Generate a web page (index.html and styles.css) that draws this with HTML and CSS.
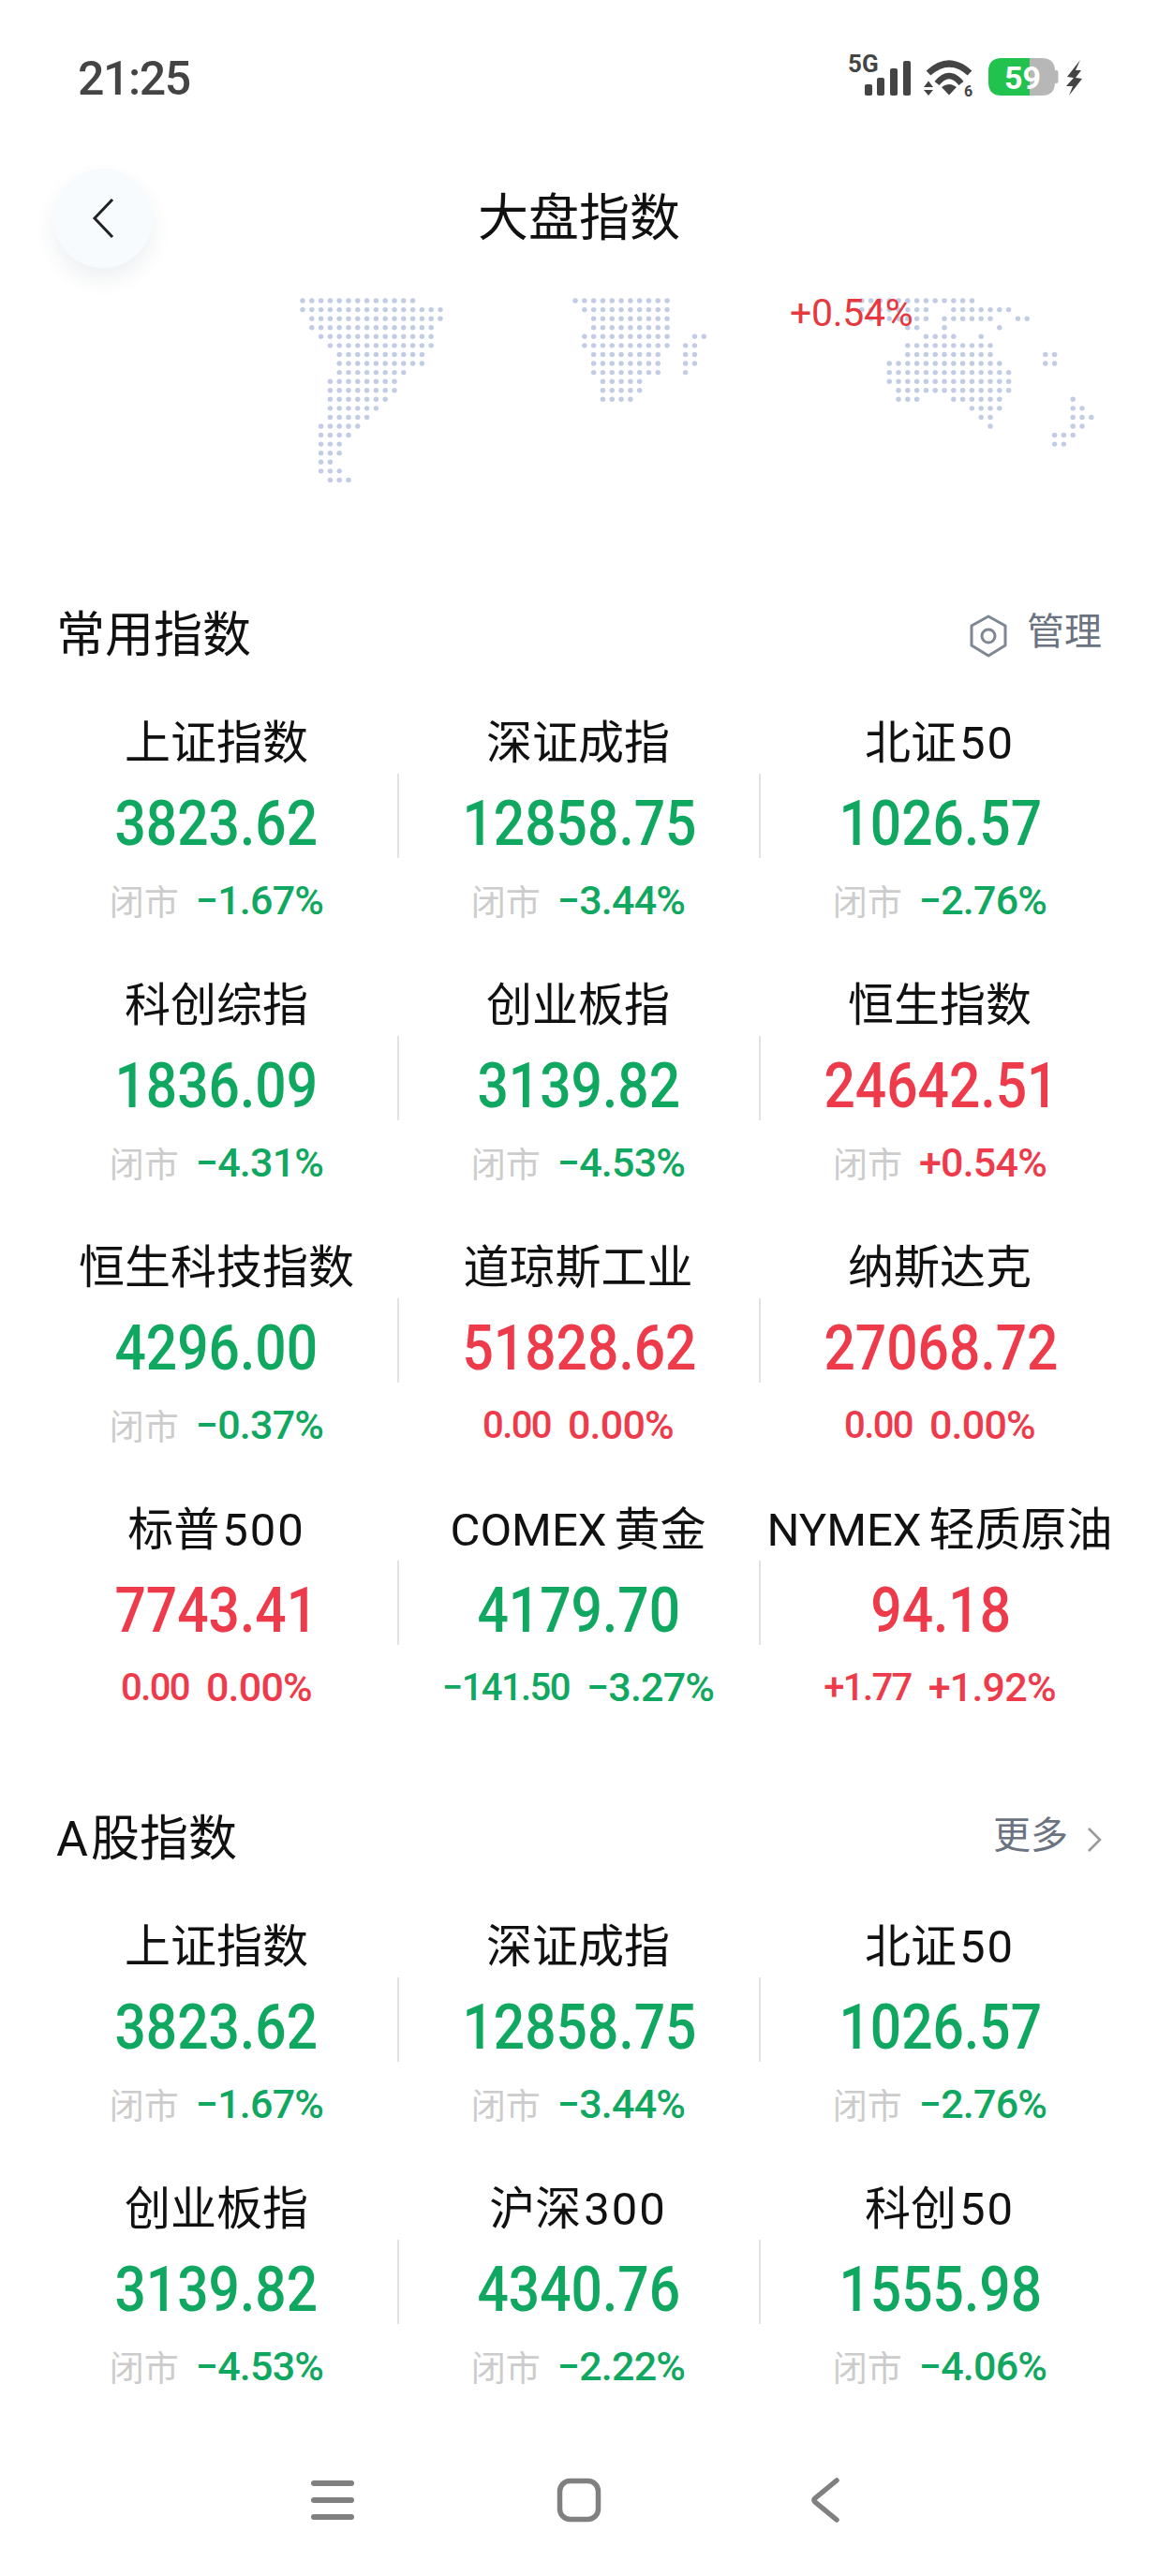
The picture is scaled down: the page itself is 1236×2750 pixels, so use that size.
FILE: index.html
```html
<!DOCTYPE html>
<html lang="zh">
<head>
 <meta charset="utf-8">
 <title>大盘指数</title>
 <link rel="stylesheet" href="styles.css">
</head>
<body>
 <!-- status bar -->
 <div class="status">
  <span class="time">21:25</span>
  <svg class="status-icons" width="252" height="56" viewBox="0 -8 252 56">
   <text x="0" y="19" class="net">5G</text>
   <g fill="#444">
    <rect x="18" y="32" width="8" height="12" rx="2"/>
    <rect x="31" y="25" width="8" height="19" rx="2"/>
    <rect x="45" y="15" width="8" height="29" rx="2"/>
    <rect x="59" y="7" width="8" height="37" rx="2"/>
    <path d="M86 28.500l5 6.500h-10z M86 44l-5-6h10z"/>
    <path d="M100 35q8-6 16 0l-8 8.500z"/>
    <text x="124" y="45" class="wifi-num">6</text>
   </g>
   <g fill="none" stroke="#444">
    <path d="M86 20q22-20 44 0" stroke-width="7"/>
    <path d="M95 31q13-16 26 0" stroke-width="6.500"/>
   </g>
   <path d="M194 4h13q14 0 14 14v12q0 14-14 14h-13z" fill="#b7b7b7"/>
   <path d="M194 4h-30q-14 0-14 14v12q0 14 14 14h30z" fill="#22c24e"/>
   <rect x="220" y="17" width="4.500" height="14" rx="2" fill="#b7b7b7"/>
   <text x="167" y="37" class="batt">59</text>
   <path d="M248 6L234 24l7 1-8 9h7l-4 10 14-18-7-1 6-8h-6z" fill="#444"/>
  </svg>
 </div>

 <!-- title bar -->
 <div class="topbar">
  <div class="back">
   <svg width="24" height="42" viewBox="0 0 24 42"><path d="M22 1L3 21l19 20" fill="none" stroke="#222" stroke-width="3"/></svg>
  </div>
  <h1>大盘指数</h1>
 </div>

 <!-- dotted world map -->
 <div class="map">
  <svg width="1236" height="216" viewBox="0 0 1236 216">
   <g class="dots" transform="translate(323 7) scale(9.8 9.57)">
    <path d="M0 0H12.100M0 1H15.100M1 2H15.100M1 3H14.100M2 4H14.100M3 5H14.100M4 6H13.100M4 7H13.100M4 8H11.100M3 9H10.100M3 10H10.100M3 11H9.100M3 12H8.100M3 13H7.100M2 14H6.100M2 15H5.100M2 16H4.100M2 17H4.100M2 18H3.100M2 19H4.100M3 20H5.100"/>
    <path transform="translate(29.700 0)" d="M0 0H10.100M1 1H10.100M2 2H10.100M2 3H10.100M1 4H10.100M13 4H14.100M1 5H10.100M12 5H13.100M2 6H9.100M12 6H13.100M2 7H9.100M12 7H13.100M2 8H9.100M12 8H12.100M3 9H7.100M3 10H7.100M3 11H6.100"/>
    <path transform="translate(60.900 0)" d="M0 0H12.100M0 1H7.100M10 1H16.100M1 2H7.100M9 2H14.100M17 2H18.100M5 3H6.100M9 3H9.100M15 3H15.100M7 4H10.100M13 4H13.100M5 5H14.100M5 6H14.100M20 6H21.100M3 7H15.100M20 7H21.100M3 8H16.100M3 9H16.100M4 10H16.100M4 11H6.100M10 11H15.100M23 11H23.100M12 12H15.100M23 12H24.100M13 13H14.100M23 13H25.100M14 14H14.100M23 14H24.100M21 15H23.100M21 16H22.100"/>
   </g>
  </svg>
  <span class="map-tag">+0.54%</span>
 </div>

 <!-- common indexes -->
 <div class="sec-head">
  <h2>常用指数</h2>
  <div class="sec-link">
   <svg width="42" height="46" viewBox="0 0 42 46"><path d="M21 2l18 10v21L21 44 3 33V12z" fill="none" stroke="#7f8794" stroke-width="3" stroke-linejoin="round"/><circle cx="21" cy="23" r="7" fill="none" stroke="#7f8794" stroke-width="3"/></svg>
   <span>管理</span>
  </div>
 </div>
 <div class="grid">
  <div class="cell"><p class="name">上证指数</p><div class="val down"><span>3823.62</span></div><p class="sub down"><i>闭市</i><b>−1.67%</b></p></div>
  <div class="cell"><p class="name">深证成指</p><div class="val down"><span>12858.75</span></div><p class="sub down"><i>闭市</i><b>−3.44%</b></p></div>
  <div class="cell"><p class="name">北证<span class="lat">50</span></p><div class="val down"><span>1026.57</span></div><p class="sub down"><i>闭市</i><b>−2.76%</b></p></div>
  <div class="cell"><p class="name">科创综指</p><div class="val down"><span>1836.09</span></div><p class="sub down"><i>闭市</i><b>−4.31%</b></p></div>
  <div class="cell"><p class="name">创业板指</p><div class="val down"><span>3139.82</span></div><p class="sub down"><i>闭市</i><b>−4.53%</b></p></div>
  <div class="cell"><p class="name">恒生指数</p><div class="val up"><span>24642.51</span></div><p class="sub up"><i>闭市</i><b>+0.54%</b></p></div>
  <div class="cell"><p class="name">恒生科技指数</p><div class="val down"><span>4296.00</span></div><p class="sub down"><i>闭市</i><b>−0.37%</b></p></div>
  <div class="cell"><p class="name">道琼斯工业</p><div class="val up"><span>51828.62</span></div><p class="sub up"><b>0.00</b><b>0.00%</b></p></div>
  <div class="cell"><p class="name">纳斯达克</p><div class="val up"><span>27068.72</span></div><p class="sub up"><b>0.00</b><b>0.00%</b></p></div>
  <div class="cell"><p class="name">标普<span class="lat">500</span></p><div class="val up"><span>7743.41</span></div><p class="sub up"><b>0.00</b><b>0.00%</b></p></div>
  <div class="cell"><p class="name">COMEX<span class="cjk">黄金</span></p><div class="val down"><span>4179.70</span></div><p class="sub down"><b>−141.50</b><b>−3.27%</b></p></div>
  <div class="cell"><p class="name">NYMEX<span class="cjk">轻质原油</span></p><div class="val up"><span>94.18</span></div><p class="sub up"><b>+1.77</b><b>+1.92%</b></p></div>
 </div>

 <!-- A shares -->
 <div class="sec-head sec-next">
  <h2><span class="letter">A</span>股指数</h2>
  <div class="sec-link">
   <span>更多</span>
   <svg width="16" height="26" viewBox="0 0 16 26"><path d="M2 1l12 12L2 25" fill="none" stroke="#999" stroke-width="2.500"/></svg>
  </div>
 </div>
 <div class="grid">
  <div class="cell"><p class="name">上证指数</p><div class="val down"><span>3823.62</span></div><p class="sub down"><i>闭市</i><b>−1.67%</b></p></div>
  <div class="cell"><p class="name">深证成指</p><div class="val down"><span>12858.75</span></div><p class="sub down"><i>闭市</i><b>−3.44%</b></p></div>
  <div class="cell"><p class="name">北证<span class="lat">50</span></p><div class="val down"><span>1026.57</span></div><p class="sub down"><i>闭市</i><b>−2.76%</b></p></div>
  <div class="cell"><p class="name">创业板指</p><div class="val down"><span>3139.82</span></div><p class="sub down"><i>闭市</i><b>−4.53%</b></p></div>
  <div class="cell"><p class="name">沪深<span class="lat">300</span></p><div class="val down"><span>4340.76</span></div><p class="sub down"><i>闭市</i><b>−2.22%</b></p></div>
  <div class="cell"><p class="name">科创<span class="lat">50</span></p><div class="val down"><span>1555.98</span></div><p class="sub down"><i>闭市</i><b>−4.06%</b></p></div>
 </div>

 <!-- system navigation -->
 <div class="sysnav">
  <svg width="48" height="48" viewBox="0 0 48 48"><path d="M4 6h40M4 24h40M4 42h40" stroke="#808080" stroke-width="6" stroke-linecap="round"/></svg>
  <svg width="48" height="48" viewBox="0 0 48 48"><rect x="3.500" y="3.500" width="41" height="41" rx="11" fill="none" stroke="#808080" stroke-width="5.500"/></svg>
  <svg width="48" height="48" viewBox="0 0 48 48"><path d="M36 3L13 22q-2 2 0 4l23 19" fill="none" stroke="#808080" stroke-width="5.500" stroke-linecap="round"/></svg>
 </div>
</body>
</html>
```
FILE: styles.css
```css
/* General */
* {
 box-sizing: border-box;
}
body {
 margin: 0;
 width: 1236px;
 height: 2750px;
 overflow: hidden;
 background-color: #fff;
 color: #111;
 font-family: Roboto, "Noto Sans CJK SC", sans-serif;
}
p, h1, h2 {
 margin: 0;
 font-weight: 400;
}

/* Status bar */
.status {
 height: 126px;
 padding: 58px 79px 0 83px;
 display: flex;
 justify-content: space-between;
 align-items: flex-start;
}
.time {
 font-size: 50px;
 line-height: 52px;
 font-weight: 500;
 letter-spacing: -1.400px;
 color: #444;
}
.status-icons {
 flex: none;
 margin-top: -8px;
}
.net {
 font-size: 26px;
 font-weight: 700;
 fill: #444;
}
.wifi-num {
 font-size: 16px;
 font-weight: 700;
}
.batt {
 font-size: 34px;
 font-weight: 700;
 fill: #fff;
}

/* Title bar */
.topbar {
 height: 180px;
 padding-left: 57px;
 display: flex;
 align-items: flex-start;
 position: relative;
}
.back {
 width: 106px;
 height: 106px;
 margin-top: 54px;
 border-radius: 50%;
 background-color: #f8fbfe;
 box-shadow: 0 12px 22px rgba(40, 60, 90, 0.08);
 display: flex;
 align-items: center;
 justify-content: center;
}
.topbar h1 {
 position: absolute;
 left: 0;
 right: 0;
 top: 74px;
 text-align: center;
 font-size: 54px;
 line-height: 68px;
}

/* Map */
.map {
 position: relative;
 height: 330px;
 margin-top: 8px;
}
.map svg {
 display: block;
}
.dots path {
 fill: none;
 stroke: #c2cde5;
 stroke-width: 0.56;
 stroke-linecap: round;
 stroke-dasharray: 0 1;
}
.map-tag {
 position: absolute;
 left: 843px;
 top: 0;
 font-size: 41px;
 line-height: 40px;
 letter-spacing: -0.300px;
 color: #e5393f;
}

/* Section heads */
.sec-head {
 height: 70px;
 padding: 0 60px 0 60px;
 display: flex;
 justify-content: space-between;
 align-items: center;
}
.sec-head h2 {
 font-size: 52px;
 line-height: 70px;
}
.letter {
 margin-right: 3px;
}
.sec-next {
 margin-top: 95px;
}
.sec-link {
 display: flex;
 align-items: center;
 gap: 20px;
 font-size: 40px;
 color: #6b7280;
}
.sec-link span {
 margin-top: -16px;
}

/* Index grid */
.grid {
 display: grid;
 grid-template-columns: repeat(3, 386px);
 padding-left: 38px;
}
.cell {
 height: 280px;
 padding-top: 48px;
 text-align: center;
}
.name {
 height: 64px;
 font-size: 49px;
 line-height: 64px;
 white-space: nowrap;
}
.lat {
 margin-left: 3px;
 letter-spacing: 2px;
}
.cjk {
 margin-left: 8px;
}
.val {
 height: 90px;
 padding-top: 17px;
 display: flex;
 justify-content: center;
 align-items: center;
 font-size: 66px;
 font-weight: 500;
}
.val span {
 display: inline-block;
 transform: scaleX(0.89);
}
.cell:not(:nth-child(3n+1)) .val {
 border-left: 2px solid #e2e2e2;
}
.sub {
 margin-top: 22px;
 height: 46px;
 display: flex;
 justify-content: center;
 align-items: center;
 gap: 18px;
 font-size: 43px;
 font-weight: 500;
 letter-spacing: -0.800px;
 white-space: nowrap;
}
.sub b {
 font-weight: 500;
}
.sub b:first-child {
 font-size: 40px;
 letter-spacing: -1.600px;
}
.sub i {
 font-style: normal;
 font-weight: 400;
 font-size: 37px;
 letter-spacing: 0;
 color: #ccc;
}
.down {
 color: #10a760;
}
.up {
 color: #ee3b4b;
}

/* System navigation */
.sysnav {
 margin-top: 86px;
 display: flex;
 justify-content: center;
 gap: 215px;
}
```
